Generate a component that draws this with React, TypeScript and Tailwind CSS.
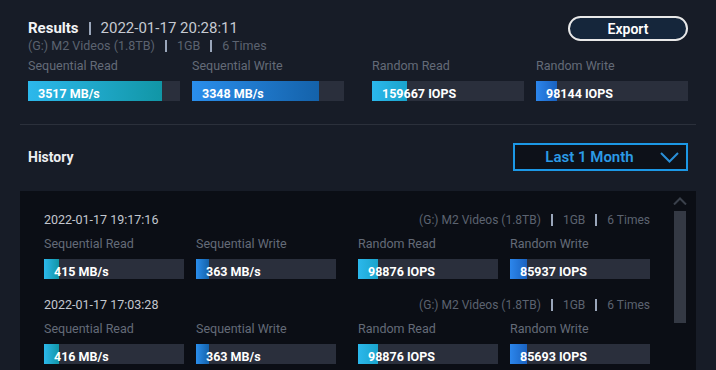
import React from "react";

type Metric = {
  label: string;
  value: string;
  fill: number;
  gradient: string;
};

type HistoryRow = {
  date: string;
  metrics: Metric[];
};

const SEQ_READ = "bg-gradient-to-r from-[#2cb8ec] to-[#1196a6]";
const SEQ_WRITE = "bg-gradient-to-r from-[#2a8eec] to-[#1462aa]";
const RND_READ = "bg-gradient-to-r from-[#2bb8ec] to-[#1aa4cc]";
const RND_WRITE = "bg-gradient-to-r from-[#2c86ec] to-[#1a62c0]";

const results: Metric[] = [
  { label: "Sequential Read", value: "3517 MB/s", fill: 134, gradient: SEQ_READ },
  { label: "Sequential Write", value: "3348 MB/s", fill: 127, gradient: SEQ_WRITE },
  { label: "Random Read", value: "159667 IOPS", fill: 35, gradient: RND_READ },
  { label: "Random Write", value: "98144 IOPS", fill: 21, gradient: RND_WRITE },
];

const history: HistoryRow[] = [
  {
    date: "2022-01-17 19:17:16",
    metrics: [
      { label: "Sequential Read", value: "415 MB/s", fill: 15, gradient: SEQ_READ },
      { label: "Sequential Write", value: "363 MB/s", fill: 13, gradient: SEQ_WRITE },
      { label: "Random Read", value: "98876 IOPS", fill: 20, gradient: RND_READ },
      { label: "Random Write", value: "85937 IOPS", fill: 17, gradient: RND_WRITE },
    ],
  },
  {
    date: "2022-01-17 17:03:28",
    metrics: [
      { label: "Sequential Read", value: "416 MB/s", fill: 15, gradient: SEQ_READ },
      { label: "Sequential Write", value: "363 MB/s", fill: 13, gradient: SEQ_WRITE },
      { label: "Random Read", value: "98876 IOPS", fill: 20, gradient: RND_READ },
      { label: "Random Write", value: "85693 IOPS", fill: 17, gradient: RND_WRITE },
    ],
  },
];

function Pipe({ className = "" }: { className?: string }) {
  return (
    <span
      className={`inline-block w-[2px] bg-[#9aa6ba] align-middle ${className}`}
    />
  );
}

function Bar({ metric, width }: { metric: Metric; width: string }) {
  return (
    <div className={`flex flex-col ${width}`}>
      <div className="text-[12.5px] leading-[16px] text-[#646b78] whitespace-nowrap">
        {metric.label}
      </div>
      <div className="relative mt-[7px] h-[20px] bg-[#2a2f3c]">
        <div
          className={`absolute inset-y-0 left-0 ${metric.gradient}`}
          style={{ width: metric.fill }}
        />
        <span className="relative pl-[10px] text-[12.5px] leading-[20px] font-bold text-white whitespace-nowrap">
          {metric.value}
        </span>
      </div>
    </div>
  );
}

function Meta({ big }: { big?: boolean }) {
  return (
    <div
      className={`flex items-center text-[#5c6370] whitespace-nowrap ${
        big ? "text-[12.5px] gap-[10px]" : "text-[12px] gap-[10px]"
      }`}
    >
      <span>(G:) M2 Videos (1.8TB)</span>
      <Pipe className="h-[12px]" />
      <span>1GB</span>
      <Pipe className="h-[12px]" />
      <span>6 Times</span>
    </div>
  );
}

export default function App() {
  return (
    <div
      className="w-[716px] h-[370px] overflow-hidden bg-[#171c27] flex flex-col"
      style={{ fontFamily: "Roboto, 'Noto Sans', sans-serif" }}
    >
      {/* results */}
      <div className="px-[28px] pt-[16px]">
        <div className="flex justify-between items-start">
          <div className="mt-[2px] flex flex-col">
            <div className="flex items-center h-[20px] whitespace-nowrap">
              <span className="text-[15px] font-bold text-[#f2f3f5]">Results</span>
              <Pipe className="h-[13px] ml-[10px] mr-[10px]" />
              <span className="text-[15px] text-[#c6cad2]">2022-01-17 20:28:11</span>
            </div>
            <div className="h-[16px] flex items-center">
              <Meta big />
            </div>
          </div>
          <button className="w-[120px] h-[25px] rounded-full border-2 border-[#e8e8e8] bg-[#15263b] text-white text-[14px] font-semibold leading-none">
            Export
          </button>
        </div>
        <div className="mt-[4px] flex gap-[28px]">
          <div className="flex gap-[12px]">
            <Bar metric={results[0]} width="w-[152px]" />
            <Bar metric={results[1]} width="w-[152px]" />
          </div>
          <div className="flex gap-[12px]">
            <Bar metric={results[2]} width="w-[152px]" />
            <Bar metric={results[3]} width="w-[152px]" />
          </div>
        </div>
      </div>

      <div className="mx-[20px] mt-[23px] border-t border-[#2b303b]" />

      {/* history header */}
      <div className="mx-[20px] mt-[18px] pl-[8px] pr-[8px] flex items-center justify-between">
        <span className="text-[14px] font-bold text-[#eceef1]">History</span>
        <div className="relative w-[175px] h-[28px] border-2 border-[#1c98e6] bg-[#0d1119] flex items-center justify-center">
          <span className="text-[15px] font-semibold text-[#2b9be6] -ml-[22px]">
            Last 1 Month
          </span>
          <svg
            className="absolute right-[7px] top-[7px]"
            width="19"
            height="11"
            viewBox="0 0 19 11"
            fill="none"
          >
            <path d="M1 1l8.5 8.5L18 1" stroke="#2a8fd8" strokeWidth="2" />
          </svg>
        </div>
      </div>

      {/* history panel */}
      <div className="mx-[20px] mt-[20px] flex-1 bg-[#0b0e15] flex">
        <div className="ml-[24px] w-[606px] pt-[20px] flex flex-col gap-[17px]">
          {history.map((row) => (
            <div key={row.date} className="flex flex-col">
              <div className="h-[18px] flex items-center justify-between">
                <span className="text-[12.5px] text-[#c3c7cf]">{row.date}</span>
                <Meta />
              </div>
              <div className="mt-[7px] flex gap-[22px]">
                <div className="flex gap-[12px]">
                  <Bar metric={row.metrics[0]} width="w-[140px]" />
                  <Bar metric={row.metrics[1]} width="w-[140px]" />
                </div>
                <div className="flex gap-[12px]">
                  <Bar metric={row.metrics[2]} width="w-[140px]" />
                  <Bar metric={row.metrics[3]} width="w-[140px]" />
                </div>
              </div>
            </div>
          ))}
        </div>
        <div className="ml-[23px] pt-[6px] flex flex-col items-center w-[14px]">
          <svg width="14" height="8" viewBox="0 0 14 8" fill="none">
            <path d="M1 7.5L7 1.5l6 6" stroke="#3a404b" strokeWidth="2" />
          </svg>
          <div className="mt-[6px] w-[12px] h-[112px] bg-[#343944]" />
        </div>
      </div>
    </div>
  );
}
